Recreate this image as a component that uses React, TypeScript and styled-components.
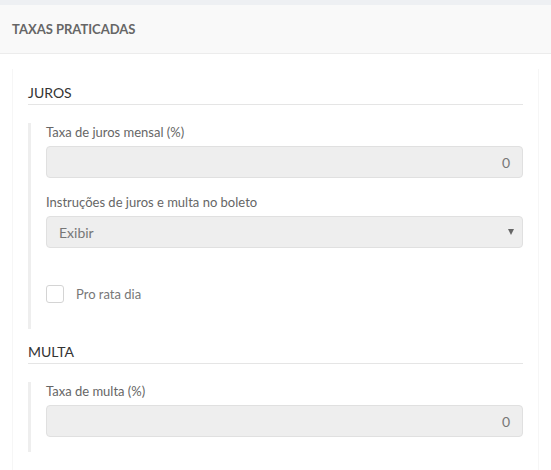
import React from "react";
import styled, { createGlobalStyle } from "styled-components";

const Global = createGlobalStyle`
  html, body { margin: 0; padding: 0; background: #fff; }
  body { font-family: Lato, "Open Sans", "Liberation Sans", sans-serif; color: #555; }
  * { box-sizing: border-box; }
`;

const TopStrip = styled.div`
  height: 5px;
  background: #eef0f3;
`;

const Header = styled.div`
  height: 49px;
  display: flex;
  align-items: center;
  padding: 0 12px;
  background: #f9f9f9;
  border-bottom: 1px solid #ececec;
`;

const Title = styled.h2`
  margin: 0;
  font-size: 13px;
  font-weight: 700;
  color: #666;
`;

const Body = styled.div`
  padding: 15px 12px 0;
`;

const Panel = styled.div`
  border-left: 1px solid #f6f6f6;
  border-right: 1px solid #f6f6f6;
  padding: 14px 15px 20px;
`;

const SectionTitle = styled.h3<{ $top?: number }>`
  margin: ${(p) => p.$top ?? 0}px 0 0;
  font-size: 14px;
  font-weight: 400;
  line-height: 20px;
  color: #333;
  padding-bottom: 1px;
  border-bottom: 1px solid #e5e5e5;
`;

const Group = styled.div<{ $bottom: number }>`
  margin-top: 18px;
  border-left: 3px solid #eeeeee;
  padding: 0 0 ${(p) => p.$bottom}px 15px;
  display: flex;
  flex-direction: column;
`;

const Field = styled.div<{ $top?: number }>`
  margin-top: ${(p) => p.$top ?? 0}px;
  display: flex;
  flex-direction: column;
  gap: 5px;
`;

const Label = styled.label`
  font-size: 13px;
  line-height: 18px;
  color: #666;
`;

const Input = styled.div`
  height: 32px;
  background: #eeeeee;
  border: 1px solid #e0e0e0;
  border-radius: 4px;
  display: flex;
  align-items: center;
  justify-content: flex-end;
  padding: 0 12px;
  font-size: 14px;
  color: #777;
`;

const Select = styled(Input)`
  justify-content: space-between;
`;

const Arrow = styled.span`
  width: 0;
  height: 0;
  border-left: 3.5px solid transparent;
  border-right: 3.5px solid transparent;
  border-top: 6px solid #666;
  margin-right: -4px;
`;

const CheckRow = styled.label`
  margin-top: 37px;
  display: flex;
  align-items: center;
  gap: 12px;
  font-size: 13px;
  color: #777;
  line-height: 18px;
`;

const Box = styled.span`
  width: 18px;
  height: 18px;
  border: 1px solid #d4d4d4;
  border-radius: 3px;
  background: #fff;
`;

export default function App() {
  return (
    <>
      <Global />
      <TopStrip />
      <Header>
        <Title>TAXAS PRATICADAS</Title>
      </Header>
      <Body>
        <Panel>
          <SectionTitle>JUROS</SectionTitle>
          <Group $bottom={26}>
            <Field>
              <Label>Taxa de juros mensal (%)</Label>
              <Input>0</Input>
            </Field>
            <Field $top={15}>
              <Label>Instruções de juros e multa no boleto</Label>
              <Select>
                <span>Exibir</span>
                <Arrow />
              </Select>
            </Field>
            <CheckRow>
              <Box />
              Pro rata dia
            </CheckRow>
          </Group>
          <SectionTitle $top={13}>MULTA</SectionTitle>
          <Group $bottom={15}>
            <Field>
              <Label>Taxa de multa (%)</Label>
              <Input>0</Input>
            </Field>
          </Group>
        </Panel>
      </Body>
    </>
  );
}
